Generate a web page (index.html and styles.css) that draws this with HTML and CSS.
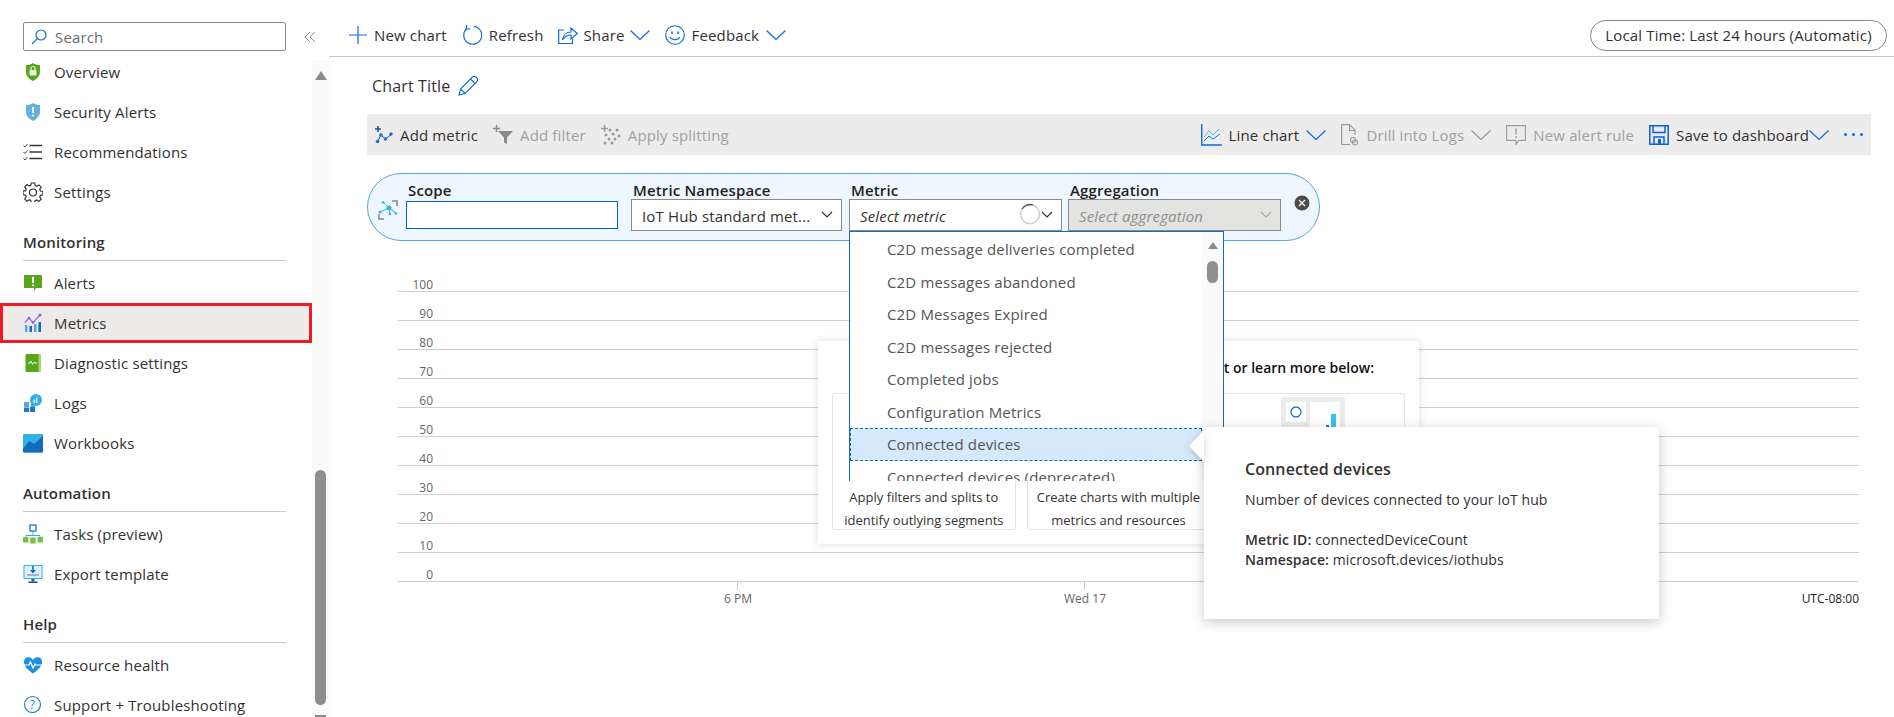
FILE: index.html
```html
<!DOCTYPE html>
<html lang="en">
<head>
    <meta charset="UTF-8">
    <title>Metrics</title>
    <link rel="stylesheet" href="styles.css">
</head>
<body>
    <aside class="sidebar">
        <div class="search-row">
            <div class="search-box">
                <svg class="search-icon" width="16" height="16" viewBox="0 0 16 16" fill="none" stroke="#0f78d4" stroke-width="1.2"><circle cx="10" cy="6" r="5"/><path d="M6.3 9.7 1 15"/></svg>
                <span>Search</span>
            </div>
            <svg class="collapse" width="12" height="12" viewBox="0 0 12 12" fill="none" stroke="#8a8a8a"><path d="M6 1 1 6l5 5M11 1 6 6l5 5"/></svg>
        </div>
        <div class="nav-wrap">
            <nav class="nav">
                <a class="nav-item"><svg width="20" height="20" viewBox="0 0 20 20"><path d="M10 1c2 1.500 4 2 7 2v7c0 4-3 7-7 9-4-2-7-5-7-9V3c3 0 5-.5 7-2z" fill="#5ba51e"/><rect x="6.500" y="8" width="7" height="5.500" rx="1" fill="#e6f3d8"/><path d="M8 8V6.500a2 2 0 0 1 4 0V8" fill="none" stroke="#e6f3d8" stroke-width="1.200"/></svg>Overview</a>
                <a class="nav-item"><svg width="20" height="20" viewBox="0 0 20 20"><path d="M10 1c2 1.500 4 2 7 2v7c0 4-3 7-7 9-4-2-7-5-7-9V3c3 0 5-.5 7-2z" fill="#63b1dd"/><rect x="9" y="5" width="2" height="6" fill="#fff"/><circle cx="10" cy="13.500" r="1.100" fill="#fff"/></svg>Security Alerts</a>
                <a class="nav-item"><svg width="20" height="20" viewBox="0 0 20 20" fill="none" stroke="#333" stroke-width="1.400"><path d="M6.500 3.500H19M6.500 10H19M6.500 16.500H19"/><path d="M.5 3.500 2 5l2.500-3M.5 10 2 11.500 4.500 8.500M.5 16.500 2 18l2.500-3" stroke-width=".9"/></svg>Recommendations</a>
                <a class="nav-item"><svg width="20" height="20" viewBox="0 0 20 20" fill="none" stroke="#333" stroke-width="1.200"><path d="M8.300 1h3.400l.5 2.600 1.500.7 2.300-1.400 2.200 2.300-1.500 2.200.7 1.600 2.600.5v3.300l-2.600.5-.7 1.600 1.500 2.200-2.300 2.300-2.200-1.500-1.600.7-.5 2.400H8.300l-.5-2.500-1.500-.7L4 19.300l-2.200-2.300 1.400-2.200-.7-1.600L0 12.600V9.200l2.500-.5.7-1.600L1.800 4.900 4 2.600l2.300 1.500 1.500-.7z"/><circle cx="10" cy="10.500" r="3.500"/></svg>Settings</a>

                <h3 class="nav-heading">Monitoring</h3>
                <a class="nav-item"><svg width="20" height="20" viewBox="0 0 20 20"><path d="M1 2h18v13h-6l-2 3v-3H1z" fill="#5ba51e"/><rect x="9" y="4" width="2" height="6" fill="#fff"/><circle cx="10" cy="12.300" r="1.100" fill="#fff"/></svg>Alerts</a>
                <a class="nav-item nav-item-active"><svg width="20" height="20" viewBox="0 0 20 20"><rect x="2" y="12" width="2.500" height="7" fill="#5ea0ef"/><rect x="6.500" y="13" width="2.500" height="6" fill="#0f6cbd"/><rect x="11" y="11" width="2.500" height="8" fill="#5ea0ef"/><rect x="15.500" y="9" width="2.500" height="10" fill="#0f6cbd"/><path d="M2 9.500 6 5l4 4.500L17 2" fill="none" stroke="#9b6fe0" stroke-width="1.300"/><circle cx="17" cy="2" r="1.500" fill="#8a5bd6"/><circle cx="6" cy="5" r="1.300" fill="#8a5bd6"/><circle cx="10" cy="9.500" r="1.300" fill="#8a5bd6"/></svg>Metrics</a>
                <a class="nav-item"><svg width="20" height="20" viewBox="0 0 20 20"><rect x="2.500" y="1" width="15" height="18" rx="1" fill="#5ba51e"/><rect x="15.500" y="1" width="2" height="18" fill="#a3d46f"/><path d="M5 10h2l1-2 1.500 3.500L11 9l.7 1H14" fill="none" stroke="#e6f3d8"/></svg>Diagnostic settings</a>
                <a class="nav-item"><svg width="20" height="20" viewBox="0 0 20 20"><circle cx="13" cy="7" r="6" fill="#32b0e7"/><path d="M8 10h4v5H8z" fill="#32b0e7"/><rect x="10.500" y="6.500" width="1.300" height="3.500" fill="#fff"/><rect x="13" y="4.500" width="1.300" height="5.500" fill="#fff"/><rect x="1" y="9" width="5" height="5" fill="#5ea0ef"/><rect x="7" y="14" width="5" height="5" fill="#1d75d3"/><rect x="1" y="14.500" width="5" height="4.500" fill="#1d75d3"/></svg>Logs</a>
                <a class="nav-item"><svg width="20" height="20" viewBox="0 0 20 20"><rect x="0" y="1" width="20" height="18.500" rx="1" fill="#32b0e7"/><path d="M0 16 6 8l5 3 9-8v15.500a1 1 0 0 1-1 1H1a1 1 0 0 1-1-1z" fill="#0f6cbd"/></svg>Workbooks</a>

                <h3 class="nav-heading">Automation</h3>
                <a class="nav-item"><svg width="20" height="20" viewBox="0 0 20 20"><rect x="7" y="1" width="6" height="6" fill="#fff" stroke="#1d75d3" stroke-width="1.300"/><path d="M10 7v5M3 14v-2.500h14V14" fill="none" stroke="#32b0e7"/><rect x="0" y="13" width="5.500" height="5.500" fill="#7ac143"/><rect x="7.200" y="13.500" width="5.500" height="6" fill="#7ac143"/><rect x="14.500" y="13" width="5.500" height="5.500" fill="#7ac143"/></svg>Tasks (preview)</a>
                <a class="nav-item"><svg width="20" height="20" viewBox="0 0 20 20"><rect x="1" y="1.500" width="18" height="13" fill="#dff2fb" stroke="#32b0e7"/><path d="M10 2v5" stroke="#0f6cbd" stroke-width="1.600"/><path d="M7 6h6l-3 3.500z" fill="#0f6cbd"/><rect x="4" y="10" width="12" height="2" fill="#a9b4bd"/><path d="M8.500 15h3v2.500h-3z" fill="#0f6cbd"/><rect x="5.500" y="17.500" width="9" height="1.500" fill="#1d4f9c"/></svg>Export template</a>

                <h3 class="nav-heading">Help</h3>
                <a class="nav-item"><svg width="20" height="20" viewBox="0 0 20 20"><path d="M10 18.500C5 15 1 11.500 1 7a4.700 4.700 0 0 1 9-2 4.700 4.700 0 0 1 9 2c0 4.500-4 8-9 11.500z" fill="#1d8fe0"/><path d="M1 10h5l1.500-3 2.500 6 2-4 1 1h6" fill="none" stroke="#fff" stroke-width="1.200"/></svg>Resource health</a>
                <a class="nav-item"><svg width="20" height="20" viewBox="0 0 20 20"><circle cx="9.500" cy="9.500" r="8" fill="none" stroke="#0f78d4" stroke-width="1.100"/><text x="9.500" y="14" text-anchor="middle" class="help-mark">?</text></svg>Support + Troubleshooting</a>
            </nav>
            <div class="scrollbar">
                <span class="scroll-up"></span>
                <span class="scroll-thumb"></span>
                <span class="scroll-down"></span>
            </div>
        </div>
    </aside>

    <main class="main">
        <header class="toolbar">
            <a class="tool"><svg width="18" height="18" viewBox="0 0 18 18" fill="none" stroke="#0f6cd4" stroke-width="1.200"><path d="M9 0v18M0 9h18"/></svg>New chart</a>
            <a class="tool"><svg width="20" height="20" viewBox="0 0 20 20" fill="none" stroke="#0f6cd4" stroke-width="1.200"><path d="M5 3.300A9 9 0 1 0 12 1.300"/><path d="M4.500 0v4h4"/></svg>Refresh</a>
            <a class="tool tool-tight"><svg width="20" height="20" viewBox="0 0 20 20" fill="none" stroke="#0f6cd4" stroke-width="1.200"><path d="M6 5H.7v13.500h13.800V14"/><path d="M4.500 15c.5-5 4-8 8.500-8V3l6.300 5.500L13 14v-4c-3.500 0-6.500 1.500-8.500 5z"/></svg>Share<svg class="chev" width="20" height="10" viewBox="0 0 20 10" fill="none" stroke="#0f6cd4" stroke-width="1.200"><path d="m.5.500 9.500 9 9.500-9"/></svg></a>
            <a class="tool"><svg width="20" height="20" viewBox="0 0 20 20" fill="none" stroke="#0f6cd4" stroke-width="1.100"><circle cx="10" cy="10" r="9.300"/><path d="M5 12c2 3.500 8 3.500 10 0"/><path d="M7 6.500v2.500M13 6.500v2.500" stroke-width="1.600"/></svg>Feedback<svg class="chev" width="20" height="10" viewBox="0 0 20 10" fill="none" stroke="#0f6cd4" stroke-width="1.200"><path d="m.5.500 9.500 9 9.500-9"/></svg></a>
            <span class="time-pill">Local Time: Last 24 hours (Automatic)</span>
        </header>

        <div class="chart-title">Chart Title
            <svg width="20" height="20" viewBox="0 0 20 20" fill="none" stroke="#0f6cd4" stroke-width="1.100"><path d="M1 19l1.500-6L14 1.500a2.500 2.500 0 0 1 4.500 4.500L7 17.500zM2.500 13 7 17.500M12.500 3l4.500 4.500"/></svg>
        </div>

        <div class="command-bar">
            <div class="command-group">
                <a class="cmd"><svg width="18" height="18" viewBox="0 0 18 18"><path d="M2.500 16 6 9l4.500 4L17 8" fill="none" stroke="#1d4f9c"/><circle cx="2.500" cy="15.500" r="1.800" fill="#1d6fd0"/><circle cx="6" cy="9" r="1.800" fill="#1d6fd0"/><circle cx="10.500" cy="13" r="1.800" fill="#1d6fd0"/><circle cx="16" cy="8" r="1.800" fill="#1d6fd0"/><path d="M3 0v6M0 3h6" stroke="#1d4f9c" stroke-width="1.500"/></svg>Add metric</a>
                <a class="cmd cmd-off"><svg width="20" height="20" viewBox="0 0 20 20"><path d="M5 6h15l-6 6.500V19l-3-1.500v-5z" fill="#8a8a8a"/><path d="M3.500 0v7M0 3.500h7" stroke="#8a8a8a" stroke-width="1.500"/></svg>Add filter</a>
                <a class="cmd cmd-off"><svg width="20" height="20" viewBox="0 0 20 20" fill="#9a9a9a"><path d="M3.500 0v7M0 3.500h7" stroke="#9a9a9a" stroke-width="1.500"/><circle cx="9" cy="5" r="1.500"/><circle cx="16" cy="5" r="1.500"/><circle cx="12" cy="9" r="1.500"/><circle cx="5" cy="10" r="1.500"/><circle cx="18" cy="11" r="1.500"/><circle cx="8" cy="14" r="1.500"/><circle cx="14" cy="14" r="1.500"/><circle cx="4" cy="18" r="1.500"/><circle cx="11" cy="18" r="1.500"/></svg>Apply splitting</a>
            </div>
            <div class="command-group">
                <a class="cmd"><svg width="21" height="22" viewBox="0 0 21 22" fill="none"><path d="M.7 0v21H21" stroke="#0f6cd4" stroke-width="1.400"/><path d="M3 13l5-6 4 4 6-6" stroke="#5fb7e5"/><path d="M3 17l5-5 4 3 7-5" stroke="#0f6cd4"/></svg>Line chart<svg class="chev" width="20" height="10" viewBox="0 0 20 10" fill="none" stroke="#0f6cd4" stroke-width="1.200"><path d="m.5.500 9.500 9 9.500-9"/></svg></a>
                <a class="cmd cmd-off"><svg width="18" height="22" viewBox="0 0 18 22" fill="none" stroke="#9a9a9a" stroke-width="1.100"><path d="M9 20.500H.6V.6h8L14 6v5M8.500 1v5.500H14"/><circle cx="12" cy="16" r="2.500"/><circle cx="14" cy="18.500" r="2.500"/></svg>Drill into Logs<svg class="chev" width="20" height="10" viewBox="0 0 20 10" fill="none" stroke="#9a9a9a" stroke-width="1.200"><path d="m.5.500 9.500 9 9.500-9"/></svg></a>
                <a class="cmd cmd-off"><svg width="20" height="20" viewBox="0 0 20 20" fill="none" stroke="#9a9a9a" stroke-width="1.100"><path d="M.6.600h18.800v14.800h-6.500l-3 4v-4H.6z"/><path d="M10 3.500v6M10 11v2" stroke-width="1.400"/></svg>New alert rule</a>
                <a class="cmd"><svg width="20" height="20" viewBox="0 0 20 20" fill="none" stroke="#0f5fd4" stroke-width="1.500"><path d="M.8.800h18.400v18.400H.8z"/><path d="M4 1v6.500h12V1M5 19v-7h10v7"/><rect x="9" y="14" width="3" height="5" fill="#0f5fd4" stroke="none"/></svg>Save to dashboard<svg class="chev-tight" width="20" height="10" viewBox="0 0 20 10" fill="none" stroke="#0f6cd4" stroke-width="1.200"><path d="m.5.500 9.500 9 9.500-9"/></svg></a>
                <span class="cmd-more"><i></i><i></i><i></i></span>
            </div>
        </div>

        <section class="metric-pill">
            <svg class="scope-icon" width="20" height="20" viewBox="0 0 20 20" fill="none"><path d="M14 1h5v5M1 14v5h5" stroke="#8a8a8a" stroke-width="1.600"/><path d="M2 12l9-4 7 5M5 2l6 6 1 5" stroke="#2fb7dc"/><circle cx="11" cy="8" r="2.500" fill="#2fb7dc"/><circle cx="2" cy="12" r="1.500" fill="#2fb7dc"/><circle cx="5" cy="2.500" r="1.300" fill="#2fb7dc"/><circle cx="12" cy="14" r="1.300" fill="#2fb7dc"/><circle cx="18" cy="13.500" r="1.300" fill="#2fb7dc"/></svg>

            <div class="field field-scope">
                <label class="field-label">Scope</label>
                <div class="scope-input"></div>
            </div>
            <div class="field field-namespace">
                <label class="field-label">Metric Namespace</label>
                <div class="select"><span class="select-text">IoT Hub standard met...</span><svg width="12" height="8" viewBox="0 0 12 8" fill="none" stroke="#333" stroke-width="1.200"><path d="m1 1 5 5 5-5"/></svg></div>
            </div>
            <div class="field">
                <label class="field-label">Metric</label>
                <div class="select">
                    <em class="select-text">Select metric</em>
                    <svg class="spinner" width="22" height="22" viewBox="0 0 22 22" fill="none"><circle cx="11" cy="11" r="9.500" stroke="#d0d0d0" stroke-width="1.600"/><path d="M3 6a9.500 9.500 0 0 1 11-4" stroke="#555" stroke-width="1.300"/></svg>
                    <svg width="12" height="8" viewBox="0 0 12 8" fill="none" stroke="#333" stroke-width="1.200"><path d="m1 1 5 5 5-5"/></svg>
                    <div class="dropdown">
                        <ul class="dropdown-list">
                            <li>C2D message deliveries completed</li>
                            <li>C2D messages abandoned</li>
                            <li>C2D Messages Expired</li>
                            <li>C2D messages rejected</li>
                            <li>Completed jobs</li>
                            <li>Configuration Metrics</li>
                            <li class="dropdown-current">Connected devices</li>
                            <li>Connected devices (deprecated)</li>
                        </ul>
                        <div class="scrollbar scrollbar-small">
                            <span class="scroll-up"></span>
                            <span class="scroll-thumb"></span>
                        </div>
                    </div>
                </div>
            </div>
            <div class="field">
                <label class="field-label">Aggregation</label>
                <div class="select select-off"><em class="select-text">Select aggregation</em><svg width="12" height="8" viewBox="0 0 12 8" fill="none" stroke="#a8a8a8" stroke-width="1.200"><path d="m1 1 5 5 5-5"/></svg></div>
            </div>
            <svg class="pill-close" width="16" height="16" viewBox="0 0 16 16"><circle cx="8" cy="8" r="7.500" fill="#4b4b4b"/><path d="m5 5 6 6M11 5l-6 6" stroke="#fff" stroke-width="1.300"/></svg>
        </section>

        <section class="chart">
            <div class="grid-row"><span>100</span></div>
            <div class="grid-row"><span>90</span></div>
            <div class="grid-row"><span>80</span></div>
            <div class="grid-row"><span>70</span></div>
            <div class="grid-row"><span>60</span></div>
            <div class="grid-row"><span>50</span></div>
            <div class="grid-row"><span>40</span></div>
            <div class="grid-row"><span>30</span></div>
            <div class="grid-row"><span>20</span></div>
            <div class="grid-row"><span>10</span></div>
            <div class="grid-row"><span>0</span></div>
            <div class="x-axis">
                <span class="x-tick x-tick-first">6 PM</span>
                <span class="x-tick x-tick-second">Wed 17</span>
                <span class="x-zone">UTC-08:00</span>
            </div>

            <div class="welcome">
                <h4 class="welcome-title">t or learn more below:</h4>
                <div class="welcome-cards">
                    <div class="welcome-card">Apply filters and splits to<br>identify outlying segments</div>
                    <div class="welcome-card">Create charts with multiple<br>metrics and resources</div>
                    <div class="welcome-card welcome-card-art">
                        <svg width="64" height="40" viewBox="0 0 64 40"><rect width="64" height="40" rx="3" fill="#ececec"/><rect x="5" y="5" width="20" height="20" fill="#fff"/><circle cx="15" cy="15" r="5" fill="none" stroke="#1d75d3" stroke-width="1.300"/><rect x="29" y="5" width="30" height="35" fill="#fff"/><rect x="50" y="17" width="5" height="23" fill="#32c5f0"/><rect x="45" y="28" width="3" height="12" fill="#1d75d3"/></svg>
                    </div>
                </div>
            </div>

            <div class="info-card">
                <span class="info-arrow"></span>
                <strong class="info-title">Connected devices</strong>
                <p class="info-desc">Number of devices connected to your IoT hub</p>
                <p class="info-meta"><b>Metric ID:</b> connectedDeviceCount<br><b>Namespace:</b> microsoft.devices/iothubs</p>
            </div>
        </section>
    </main>
</body>
</html>
```

FILE: styles.css
```css
* {
    box-sizing: border-box;
}
html, body {
    height: 100%;
}
body {
    margin: 0;
    display: flex;
    overflow: hidden;
    background: #fff;
    color: #323130;
    font-family: "Open Sans", "Noto Sans", sans-serif;
    font-size: 15px;
    letter-spacing: .15px;
}
svg {
    flex: none;
}

/* left menu */
.sidebar {
    width: 329px;
    flex: none;
    height: 717px;
    overflow: hidden;
    display: flex;
    flex-direction: column;
}
.search-row {
    display: flex;
    align-items: center;
    height: 52px;
    padding: 22px 0 1px 23px;
    gap: 18px;
}
.search-box {
    width: 263px;
    height: 29px;
    border: 1px solid #8a8a8a;
    border-radius: 2px;
    display: flex;
    align-items: center;
    gap: 8px;
    padding-left: 7px;
    color: #6b6b6b;
}
.nav-wrap {
    flex: 1;
    display: flex;
    min-height: 0;
}
.nav {
    width: 312px;
    flex: none;
}
.nav-item {
    display: flex;
    align-items: center;
    gap: 11px;
    height: 40px;
    padding-left: 23px;
}
.nav-item-active {
    background: #edebe9;
    outline: 3px solid #ed1c24;
    outline-offset: -3px;
}
.nav-heading {
    height: 49px;
    margin: 0 26px 2px 23px;
    padding-bottom: 8px;
    display: flex;
    align-items: flex-end;
    border-bottom: 1px solid #c8c8c8;
    font-size: 15px;
    font-weight: 600;
}
.help-mark {
    font-size: 12px;
    fill: #0f78d4;
}
.scrollbar {
    width: 17px;
    margin-top: 8px;
    background: #fafafa;
    display: flex;
    flex-direction: column;
    align-items: center;
}
.scroll-up {
    width: 0;
    height: 0;
    margin-top: 11px;
    border: 6px solid transparent;
    border-top: 0;
    border-bottom: 9px solid #8a8a8a;
}
.scroll-thumb {
    width: 11px;
    height: 235px;
    flex: none;
    margin-top: 390px;
    border-radius: 6px;
    background: #8e8e8e;
}
.scroll-down {
    width: 11px;
    height: 2px;
    flex: none;
    margin-top: 10px;
    background: #8a8a8a;
}

/* top row */
.main {
    flex: 1;
    min-width: 0;
    height: 717px;
    overflow: hidden;
}
.toolbar {
    height: 57px;
    border-bottom: 1px solid #c8c8c8;
    padding: 14px 7px 0 20px;
    display: flex;
    align-items: center;
    gap: 15px;
}
.tool {
    display: flex;
    align-items: center;
    gap: 7px;
}
.tool-tight {
    gap: 5px;
}
.time-pill {
    margin-left: auto;
    width: 297px;
    height: 31px;
    border: 1px solid #8a8a8a;
    border-radius: 16px;
    display: flex;
    align-items: center;
    justify-content: center;
}
.chart-title {
    height: 57px;
    padding-left: 43px;
    padding-top: 1px;
    display: flex;
    align-items: center;
    gap: 8px;
    font-size: 16px;
}
.command-bar {
    height: 41px;
    margin: 0 23px 18px 38px;
    background: #ececec;
    display: flex;
    align-items: center;
    justify-content: space-between;
    padding: 0 8px;
}
.command-group {
    display: flex;
    align-items: center;
    gap: 15px;
}
.cmd {
    display: flex;
    align-items: center;
    gap: 7px;
}
.cmd-off {
    color: #a0a0a0;
}
.chev-tight {
    margin-left: -7px;
}
.cmd-more {
    display: flex;
    gap: 5px;
}
.cmd-more i {
    width: 3px;
    height: 3px;
    border-radius: 50%;
    background: #0f6cd4;
}

/* metric selector */
.metric-pill {
    height: 68px;
    margin: 0 0 0 38px;
    width: 953px;
    border: 1px solid #5ea3df;
    border-radius: 34px;
    background: #eef6ff;
    padding: 7px 0 0 10px;
    display: flex;
}
.scope-icon {
    margin: 19px 8px 0 0;
}
.field {
    width: 213px;
    margin-right: 6px;
}
.field-scope {
    width: 212px;
    margin-right: 13px;
}
.field-namespace {
    width: 211px;
    margin-right: 7px;
}
.field-label {
    display: block;
    height: 18px;
    line-height: 18px;
    padding-left: 2px;
    font-weight: 600;
    color: #1f1f1f;
}
.scope-input {
    height: 28px;
    margin-top: 2px;
    border: 1px solid #0063d8;
    background: #fff;
}
.select {
    position: relative;
    height: 32px;
    border: 1px solid #8a8a8a;
    background: #fff;
    display: flex;
    align-items: center;
    justify-content: space-between;
    padding: 0 8px 0 10px;
}
.select-text {
    margin-top: 2px;
}
.select em {
    margin-right: auto;
}
.select-off {
    background: #e3e3e1;
}
.select-off em {
    color: #8f8f8f;
}
.spinner {
    margin: 0 0 2px 0;
}
.pill-close {
    margin: 14px 0 0 7px;
}
.dropdown {
    position: absolute;
    z-index: 3;
    top: 31px;
    left: -1px;
    width: 375px;
    height: 250px;
    overflow: hidden;
    border: 1px solid #0f6cbd;
    border-bottom: 0;
    background: #fff;
    display: flex;
}
.dropdown-list {
    width: 352px;
    flex: none;
    margin: 0;
    padding: 1px 0 0;
    list-style: none;
    color: #555;
}
.dropdown-list li {
    height: 32.500px;
    line-height: 32px;
    padding-left: 37px;
}
.dropdown-current {
    background: #d6e9fb;
    outline: 1px dashed #0f6cbd;
    outline-offset: -1px;
}
.scrollbar-small {
    width: 21px;
    margin: 0;
}
.scrollbar-small .scroll-up {
    margin-top: 10px;
    border-width: 0 5.500px 7px;
    border-bottom-color: #8a8a8a;
}
.scrollbar-small .scroll-thumb {
    height: 22px;
    margin-top: 12px;
}

/* chart */
.chart {
    position: relative;
    margin: 22px 35px 0 69px;
}
.grid-row {
    height: 29px;
    border-bottom: 1px solid #cfcfcf;
    display: flex;
    align-items: flex-end;
}
.grid-row span {
    width: 35px;
    text-align: right;
    font-size: 12px;
    line-height: 12px;
    color: #666;
    letter-spacing: 0;
}
.x-axis {
    position: relative;
    height: 30px;
    font-size: 12px;
    letter-spacing: 0;
    color: #666;
}
.x-tick {
    position: absolute;
    top: 0;
    padding-top: 8px;
    width: 80px;
    text-align: center;
}
.x-tick::before {
    content: "";
    position: absolute;
    top: 0;
    left: 39px;
    width: 1px;
    height: 8px;
    background: #c8c8c8;
}
.x-tick-first {
    left: 300px;
}
.x-tick-second {
    left: 647px;
}
.x-zone {
    position: absolute;
    right: 0;
    top: 8px;
    color: #222;
}
.welcome {
    position: absolute;
    z-index: 1;
    top: 78px;
    left: 420px;
    width: 601px;
    height: 203px;
    background: #fff;
    box-shadow: 0 0 8px rgba(0, 0, 0, .15);
    padding: 0 14px;
}
.welcome-title {
    height: 52px;
    line-height: 54px;
    margin: 0;
    padding-right: 31px;
    text-align: right;
    white-space: nowrap;
    font-size: 14px;
    font-weight: 600;
    letter-spacing: 0;
    color: #111;
}
.welcome-cards {
    display: grid;
    grid-template-columns: repeat(3, 1fr);
    gap: 11px;
}
.welcome-card {
    height: 137px;
    border: 1px solid #e4e4e4;
    border-radius: 3px;
    display: flex;
    align-items: flex-start;
    justify-content: center;
    padding-top: 92px;
    text-align: center;
    font-size: 13px;
    letter-spacing: 0;
    line-height: 23px;
}
.welcome-card-art {
    padding-top: 3px;
}
.info-card {
    position: absolute;
    z-index: 4;
    top: 164px;
    left: 806px;
    width: 455px;
    height: 192px;
    background: #fff;
    box-shadow: 0 3px 12px rgba(0, 0, 0, .22);
    padding: 32px 41px 0;
    font-size: 14px;
    letter-spacing: .1px;
}
.info-arrow {
    position: absolute;
    top: 3px;
    left: -15px;
    width: 15px;
    height: 32px;
    filter: drop-shadow(0 2px 3px rgba(0, 0, 0, .18));
}
.info-arrow::before {
    content: "";
    display: block;
    height: 100%;
    background: #fff;
    clip-path: polygon(100% 0, 0 50%, 100% 100%);
}
.info-title {
    display: block;
    font-size: 16px;
    font-weight: 600;
    line-height: 20px;
}
.info-desc {
    margin: 11px 0 0;
    line-height: 20px;
}
.info-meta {
    margin: 20px 0 0;
    line-height: 20px;
}
.info-meta b {
    font-weight: 600;
}
```
